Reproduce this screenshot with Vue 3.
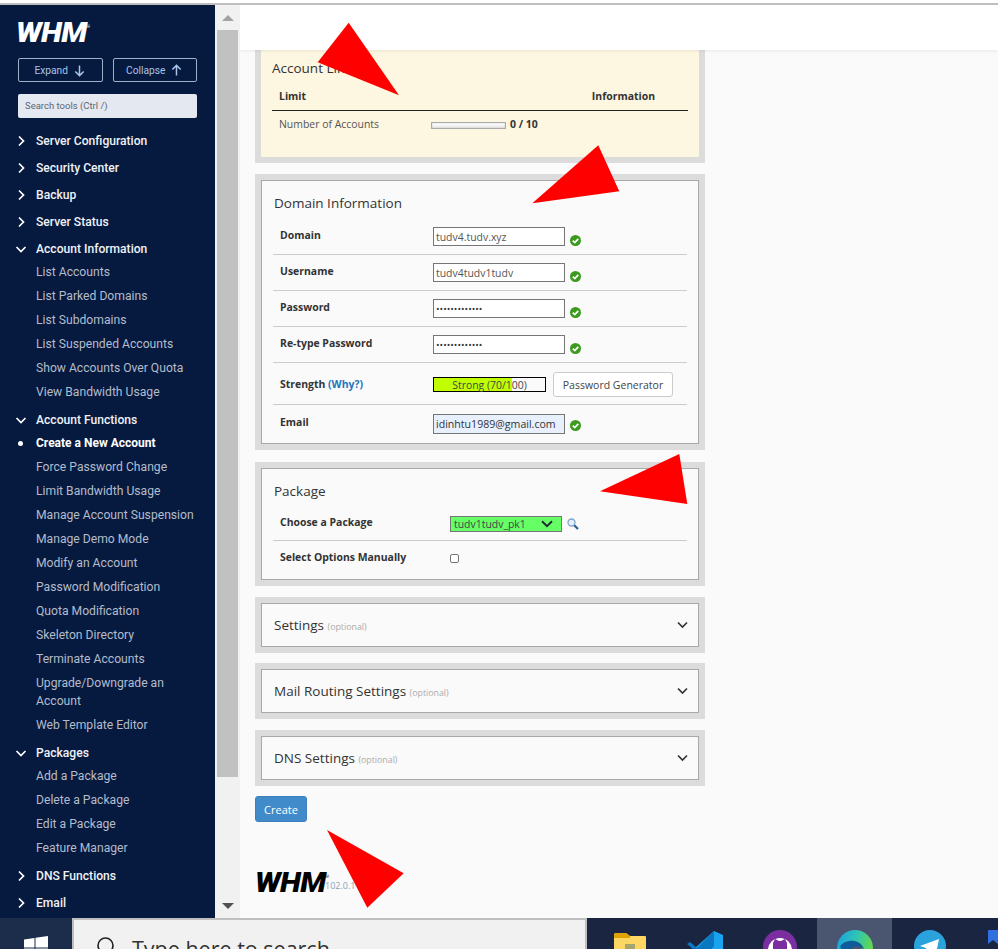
<script setup>
const menu = [
  { title: 'Server Configuration' },
  { title: 'Security Center' },
  { title: 'Backup' },
  { title: 'Server Status' },
  { title: 'Account Information', open: true, items: ['List Accounts', 'List Parked Domains', 'List Subdomains', 'List Suspended Accounts', 'Show Accounts Over Quota', 'View Bandwidth Usage'] },
  { title: 'Account Functions', open: true, active: 'Create a New Account', items: ['Create a New Account', 'Force Password Change', 'Limit Bandwidth Usage', 'Manage Account Suspension', 'Manage Demo Mode', 'Modify an Account', 'Password Modification', 'Quota Modification', 'Skeleton Directory', 'Terminate Accounts', 'Upgrade/Downgrade an Account', 'Web Template Editor'] },
  { title: 'Packages', open: true, items: ['Add a Package', 'Delete a Package', 'Edit a Package', 'Feature Manager'] },
  { title: 'DNS Functions' },
  { title: 'Email' }
]
const fields = [
  { label: 'Domain', type: 'text', value: 'tudv4.tudv.xyz' },
  { label: 'Username', type: 'text', value: 'tudv4tudv1tudv' },
  { label: 'Password', type: 'password', value: 'abcdefghijklm' },
  { label: 'Re-type Password', type: 'password', value: 'abcdefghijklm' }
]
const collapsed = ['Settings', 'Mail Routing Settings', 'DNS Settings']
const strength = 70
const arrows = [
  '348.7,22.7 317.7,62.3 399,95.3',
  '598.3,145.3 619.3,191.3 532.3,203.3',
  '679.3,454 687.3,504 600,491.3',
  '327,830 403.7,873.3 367.3,907.7'
]
</script>

<template>
  <div class="page">
    <div class="topline"></div>
    <div class="main">
      <aside class="sidebar">
        <div class="logo">WHM<span class="reg">®</span></div>
        <div class="btns">
          <button class="sbtn">Expand
            <svg width="13" height="13" viewBox="0 0 14 14"><path d="M7 1.5v11M2.5 8 7 12.5 11.5 8" fill="none" stroke="#a9c4e6" stroke-width="1.6"/></svg>
          </button>
          <button class="sbtn">Collapse
            <svg width="13" height="13" viewBox="0 0 14 14"><path d="M7 12.5v-11M2.5 6 7 1.5 11.5 6" fill="none" stroke="#a9c4e6" stroke-width="1.6"/></svg>
          </button>
        </div>
        <div class="search">Search tools (Ctrl /)</div>
        <nav class="nav">
          <div v-for="m in menu" :key="m.title">
            <div class="head">
              <svg class="chev" width="12" height="12" viewBox="0 0 12 12">
                <path v-if="m.open" d="M1.5 4 6 8.5 10.5 4" fill="none" stroke="#fff" stroke-width="1.7"/>
                <path v-else d="M4 1.5 8.5 6 4 10.5" fill="none" stroke="#fff" stroke-width="1.7"/>
              </svg>
              <span>{{ m.title }}</span>
            </div>
            <div v-if="m.open" class="sub">
              <div v-for="i in m.items" :key="i" class="item" :class="{ active: i === m.active }">{{ i }}</div>
            </div>
          </div>
        </nav>
      </aside>

      <div class="scrollbar">
        <div class="tri up"></div>
        <div class="thumb"></div>
        <div class="tri down"></div>
      </div>

      <main class="content">
        <header class="bar"></header>
        <div class="col">
          <section class="panel limits">
            <div class="limits-in">
              <h2 class="ptitle lim">Account Limits</h2>
              <div class="lhead"><b>Limit</b><b>Information</b></div>
              <div class="lrow">
                <span class="lname">Number of Accounts</span>
                <span class="meter"></span>
                <b class="count">0 / 10</b>
              </div>
            </div>
          </section>

          <section class="panel">
            <div class="inner domain">
              <h2 class="ptitle">Domain Information</h2>
              <div v-for="f in fields" :key="f.label" class="row">
                <label class="lbl">{{ f.label }}</label>
                <input class="inp" :type="f.type" :value="f.value" readonly />
                <svg class="ok" width="11" height="11" viewBox="0 0 11 11"><circle cx="5.5" cy="5.5" r="5.5" fill="#3c9a1f"/><path d="M2.8 5.6 4.8 7.6 8.3 3.8" fill="none" stroke="#fff" stroke-width="1.7"/></svg>
              </div>
              <div class="row strength">
                <label class="lbl">Strength <a class="why">(Why?)</a></label>
                <div class="sbar">
                  <div class="fill" :style="{ width: strength + '%' }"></div>
                  <span class="stext">Strong ({{ strength }}/100)</span>
                </div>
                <button class="gen">Password Generator</button>
              </div>
              <div class="row last">
                <label class="lbl">Email</label>
                <input class="inp email" type="text" value="idinhtu1989@gmail.com" readonly />
                <svg class="ok" width="11" height="11" viewBox="0 0 11 11"><circle cx="5.5" cy="5.5" r="5.5" fill="#3c9a1f"/><path d="M2.8 5.6 4.8 7.6 8.3 3.8" fill="none" stroke="#fff" stroke-width="1.7"/></svg>
              </div>
            </div>
          </section>

          <section class="panel">
            <div class="inner package">
              <h2 class="ptitle">Package</h2>
              <div class="prow first">
                <label class="lbl wide">Choose a Package</label>
                <div class="selwrap">
                  <span class="seltext">tudv1tudv_pk1</span>
                  <svg width="12" height="8" viewBox="0 0 12 8"><path d="M1 1.2 6 6.2 11 1.2" fill="none" stroke="#1f2a33" stroke-width="2"/></svg>
                </div>
                <svg class="mag" width="12" height="12" viewBox="0 0 12 12"><circle cx="4.5" cy="4.5" r="3.5" fill="#e6eff8" stroke="#7fa6cc" stroke-width="1.3"/><path d="M7.2 7.2 11 11" stroke="#2b5f94" stroke-width="2.2"/></svg>
              </div>
              <div class="prow second">
                <label class="lbl wide">Select Options Manually</label>
                <span class="cb"></span>
              </div>
            </div>
          </section>

          <section v-for="c in collapsed" :key="c" class="panel">
            <div class="inner coll">
              <div class="ctitle">{{ c }} <small>(optional)</small></div>
              <svg width="11" height="8" viewBox="0 0 11 8"><path d="M1 1.5 5.5 6 10 1.5" fill="none" stroke="#333" stroke-width="1.7"/></svg>
            </div>
          </section>

          <button class="create">Create</button>

          <div class="foot">
            <span class="logo dark">WHM<span class="reg">®</span></span>
            <span class="ver">102.0.1</span>
          </div>
        </div>
      </main>
    </div>

    <footer class="taskbar">
      <div class="start">
        <svg width="24" height="24" viewBox="0 0 24 24"><path d="M0 3.4 10.5 2v9.5H0zM11.5 1.8 24 0v11.5H11.5zM0 12.5h10.5V22L0 20.6zM11.5 12.5H24V24l-12.5-1.8z" fill="#fff"/></svg>
      </div>
      <div class="tsearch">
        <svg class="glass" width="22" height="24" viewBox="0 0 22 24"><circle cx="9.5" cy="9.5" r="7.5" fill="none" stroke="#222" stroke-width="1.6"/><path d="M4 15 0 20" stroke="#222" stroke-width="1.6"/></svg>
        <span>Type here to search</span>
      </div>
      <div class="tapps">
        <div class="app">
          <svg width="34" height="30" viewBox="0 0 34 30"><path d="M1 5a2 2 0 0 1 2-2h10l4 3h15a1 1 0 0 1 1 1v22H1z" fill="#fdd663"/><path d="M1 5a2 2 0 0 1 2-2h10l4 3v2H1z" fill="#e0a200"/><rect x="12" y="14" width="10" height="10" fill="#a7a36c"/></svg>
        </div>
        <div class="app">
          <svg width="36" height="36" viewBox="0 0 36 36"><path d="M27 1 36 5v26l-9 4L8 18z" fill="#1aa4ef"/><path d="M27 1 10 18 3 12 0 14l7 6-7 7 3 2 7-6 7 5 10-12V1z" fill="#0a78c0"/></svg>
        </div>
        <div class="app">
          <svg width="34" height="34" viewBox="0 0 34 34"><circle cx="17" cy="17" r="17" fill="#7b2ea0"/><circle cx="17" cy="20" r="12" fill="#fff"/><path d="M10 13l2-4 4 2h2l4-2 2 4v6c0 4-3 7-7 7s-7-3-7-7z" fill="#7b2ea0"/></svg>
        </div>
        <div class="app hi">
          <svg width="36" height="36" viewBox="0 0 36 36"><defs><linearGradient id="edge" x1="0" y1="0" x2="1" y2="0.3"><stop offset="0" stop-color="#1b9de2"/><stop offset="0.55" stop-color="#2fc5b5"/><stop offset="1" stop-color="#62d84e"/></linearGradient></defs><circle cx="18" cy="18" r="18" fill="url(#edge)"/><path d="M3 17c4-8 20-9 24 2-6-3-12-1-13 5-5-1-9-3-11-7z" fill="#0f5c9c"/><circle cx="20" cy="22" r="6" fill="#4a5570"/></svg>
        </div>
        <div class="app">
          <svg width="32" height="32" viewBox="0 0 32 32"><circle cx="16" cy="16" r="16" fill="#2aa3dc"/><path d="M6 16 25 9l-3 15-6-4-3 3-1-5z" fill="#fff"/></svg>
        </div>
        <div class="app">
          <svg width="34" height="34" viewBox="0 0 34 34"><path d="M0 0h10v14l-5-4-5 4z" fill="#2f6fe0"/></svg>
        </div>
      </div>
    </footer>

    <svg class="arrows" width="998" height="949" viewBox="0 0 998 949">
      <polygon v-for="p in arrows" :key="p" :points="p" fill="#ff0000"/>
    </svg>
  </div>
</template>

<style scoped>
.page { width: 998px; height: 949px; position: relative; overflow: hidden; display: flex; flex-direction: column; background: #fafafa; }
.topline { height: 5px; box-sizing: border-box; background: #fff; border-bottom: 2px solid #bfbfbf; flex: none; }
.main { display: flex; height: 913px; flex: none; overflow: hidden; }

.sidebar { width: 215px; flex: none; background: #061a40; padding: 14px 0 0 18px; box-sizing: border-box; font-family: Roboto, sans-serif; overflow: hidden; }
.logo { font: italic 900 27px/28px Roboto, sans-serif; color: #fff; letter-spacing: -0.6px; height: 28px; display: block; margin-left: -2px; transform: scaleX(1.13); transform-origin: left center; }
.reg { font-size: 4px; font-weight: 400; font-style: normal; letter-spacing: 0; position: relative; top: -14px; }
.btns { display: flex; gap: 10px; margin-top: 11px; width: 179px; }
.sbtn { flex: 1; height: 24px; box-sizing: border-box; display: flex; align-items: center; justify-content: center; gap: 5px; background: transparent; border: 1px solid #9db0cc; border-radius: 2px; color: #a9c4e6; font: 400 10.2px Roboto, sans-serif; padding: 0; }
.search { width: 179px; height: 24px; box-sizing: border-box; margin-top: 12px; background: #e4e8f1; border-radius: 2px; color: #5f6670; font: 400 9.5px/24px Roboto, sans-serif; padding-left: 7px; }
.nav { margin: 9px 0 0 -18px; }
.head { height: 27px; display: flex; align-items: center; color: #f0f2f6; font-size: 12.1px; font-weight: 500; padding-left: 15px; }
.chev { margin-right: 9px; flex: none; }
.sub { margin: -2.5px 0 2.5px; }
.item { padding: 3px 15px 3px 36px; line-height: 18px; font-size: 12.15px; color: #b4bccb; position: relative; }
.item.active { color: #fff; font-weight: 700; font-size: 12px; }
.item.active::before { content: ''; position: absolute; left: 18px; top: 10px; width: 5px; height: 5px; border-radius: 50%; background: #fff; }

.scrollbar { width: 25px; flex: none; background: #f1f1f1; display: flex; flex-direction: column; align-items: center; position: relative; }
.thumb { width: 21px; height: 747px; background: #c1c1c1; margin-top: 9px; }
.tri { width: 0; height: 0; border-left: 6px solid transparent; border-right: 6px solid transparent; }
.tri.up { border-bottom: 6px solid #a3a3a3; margin-top: 10px; }
.tri.down { border-top: 6px solid #505050; margin-top: 126px; }

.content { flex: 1; background: #fafafa; font-family: "Open Sans", sans-serif; color: #333; overflow: hidden; }
.bar { height: 45px; background: #fff; box-shadow: 0 1px 3px rgba(0,0,0,.08); position: relative; }
.col { width: 450px; margin-left: 15px; display: flex; flex-direction: column; }

.panel { border: 6px solid #dcdcdc; background: #fafafa; margin-bottom: 11px; }
.limits { border-top: 0; }
.limits-in { background: #fdf6e0; height: 107px; box-sizing: border-box; padding: 8px 11px 0; }
.inner { border: 1px solid #a8a8a8; box-sizing: border-box; background: #fafafa; }
.ptitle { font-size: 13.5px; font-weight: 400; line-height: 20px; margin: 0; color: #333; }
.ptitle.lim { margin-bottom: 10px; }
.lhead { display: flex; justify-content: space-between; font-size: 10.45px; line-height: 16px; padding: 0 33px 6px 7px; border-bottom: 1px solid #222; color: #333; }
.lrow { display: flex; align-items: center; height: 25px; padding-left: 7px; font-size: 10.45px; }
.lname { width: 152px; color: #555; }
.meter { width: 75px; height: 7px; box-sizing: border-box; background: linear-gradient(#fff, #e8e8e8); border: 1px solid #aaa; box-shadow: inset 0 0 1px #888; margin-top: 4px; }
.count { margin-left: 4px; font-size: 10.45px; }

.domain { height: 264px; padding: 12px 11px 0 12px; }
.domain .row { margin-left: -1px; }
.domain .ptitle { margin-bottom: 6px; }
.row { display: flex; align-items: flex-start; height: 36px; box-sizing: border-box; border-bottom: 1px solid #ccc; padding: 8px 0 0 7px; }
.lbl { width: 153px; flex: none; font-size: 10.45px; font-weight: 700; line-height: 16px; color: #333; }
.inp { width: 132px; height: 19px; box-sizing: border-box; border: 1px solid #767676; background: #fff; padding: 0 2px; margin: 0; font: 400 10.45px "Open Sans", sans-serif; color: #555; outline: 0; }
.inp[type="password"] { font-size: 9.5px; color: #333; }
.ok { margin: 8px 0 0 5px; flex: none; }
.strength { height: 42px; padding-top: 9px; align-items: flex-start; }
.strength .lbl { margin-top: 4px; }
.why { color: #1b75bc; }
.sbar { width: 113px; height: 15px; box-sizing: border-box; border: 1px solid #000; margin-top: 5px; position: relative; background: #fafafa; flex: none; }
.fill { position: absolute; left: 0; top: 0; bottom: 0; background: #bfff00; }
.stext { position: absolute; inset: 0; text-align: center; font-size: 10.45px; line-height: 14px; color: #444; }
.gen { width: 120px; height: 25px; margin-left: 7px; background: #fff; border: 1px solid #ccc; border-radius: 3px; font: 400 10.5px "Open Sans", sans-serif; color: #444; padding: 0; flex: none; }
.last { height: 38px; border-bottom: 0; padding-top: 9px; }
.last .inp { height: 20px; margin-top: 0; background: #e8f0fe; color: #333; font-size: 10.6px; }
.last .lbl { margin-top: 0; }
.last .ok { margin-top: 6px; }

.package { height: 112px; padding: 12px 11px 0 12px; }
.package .prow { margin-left: -1px; }
.package .ptitle { margin-bottom: 13px; }
.prow { display: flex; padding-left: 7px; box-sizing: border-box; }
.prow.first { height: 27px; border-bottom: 1px solid #ccc; align-items: flex-start; }
.prow.second { height: 38px; padding-top: 8px; align-items: flex-start; }
.wide { width: 170px; margin-top: 0; }
.selwrap { width: 112px; height: 16px; box-sizing: border-box; margin-top: 2px; background: #66ff66; border: 1px solid #767676; display: flex; align-items: center; justify-content: space-between; padding: 0 8px 0 3px; font-size: 10.45px; color: #444; }
.mag { margin: 4px 0 0 5px; }
.cb { width: 7px; height: 7px; border: 1px solid #767676; border-radius: 2px; background: #fff; margin-top: 5px; box-sizing: content-box; }

.coll { height: 44px; display: flex; align-items: center; justify-content: space-between; padding: 0 10px 0 12px; }
.ctitle { font-size: 13.5px; color: #333; }
.ctitle small { font-size: 8.8px; color: #aaa; }
.panel:nth-of-type(2) { margin-bottom: 12px; }
.panel:nth-of-type(4) { margin-bottom: 10px; }
.panel:nth-of-type(6) { margin-bottom: 10px; }
.create { width: 52px; height: 26px; background: #428bca; border: 1px solid #3d80bb; border-radius: 3px; color: #fff; font: 400 11px "Open Sans", sans-serif; padding: 0; }
.foot { display: flex; align-items: flex-end; margin-top: 47px; padding-left: 2px; }
.logo.dark { color: #000; width: 70px; flex: none; }
.ver { font-size: 9px; color: #8aa0b8; margin: 0 0 5px 0; }

.taskbar { height: 31px; flex: none; display: flex; background: #1a2542; overflow: hidden; }
.start { width: 72px; flex: none; background: #1c2c4b; padding: 18px 0 0 24px; box-sizing: border-box; }
.tsearch { width: 515px; flex: none; box-sizing: border-box; background: #f1f1f1; border: 2px solid #bfbfbf; border-width: 2px 2px 0 2px; padding: 16px 0 0 22px; position: relative; display: flex; gap: 14px; font: 400 21.5px/26px "Open Sans", sans-serif; color: #333; }
.glass { flex: none; }
.tapps { display: flex; margin-left: 5px; }
.app { width: 75px; flex: none; display: flex; justify-content: center; align-items: flex-start; padding-top: 12px; box-sizing: border-box; }
.app.hi { background: #4a5570; }

.arrows { position: absolute; left: 0; top: 0; pointer-events: none; }
</style>
